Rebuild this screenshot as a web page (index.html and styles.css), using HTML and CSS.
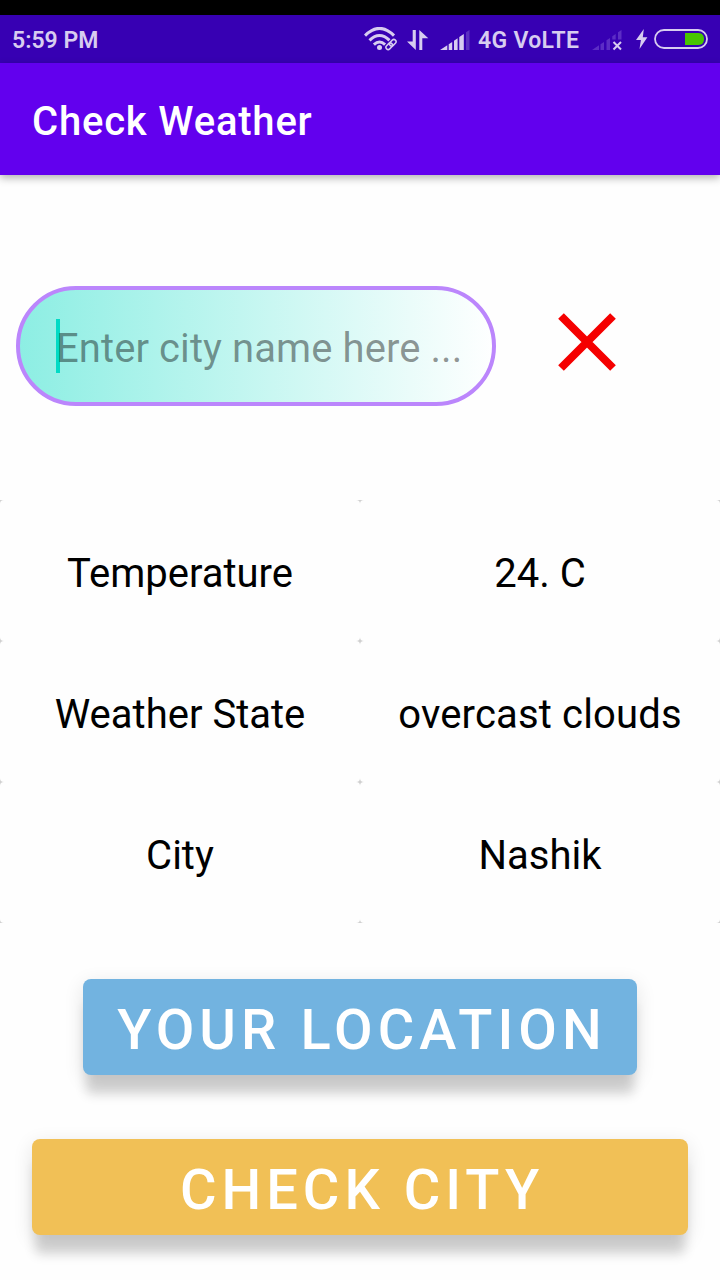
FILE: index.html
```html
<!DOCTYPE html>
<html lang="en">
<head>
<meta charset="utf-8">
<title>Check Weather</title>
<link rel="stylesheet" href="styles.css">
</head>
<body>
<div class="screen">
  <header class="status-bar">
    <span class="clock">5:59 PM</span>
    <svg class="wifi" width="34" height="24" viewBox="0 0 34 24">
      <g fill="none" stroke="#d7ccf0" stroke-width="3">
        <path d="M1 8.600Q15.500-5.800 30 8.600"/>
        <path d="M5.500 13.400Q15.500 3.400 25.500 13.400"/>
        <path d="M9.900 17.600Q15.500 12.400 21.100 17.600"/>
      </g>
      <circle cx="15.500" cy="20.500" r="2.500" fill="#d7ccf0"/>
      <g fill="none" stroke="#3700b3" stroke-width="3" transform="rotate(-45 27 17.500)"><rect x="21" y="15.300" width="12" height="4.400" rx="2.200"/></g>
      <g fill="none" stroke="#d7ccf0" stroke-width="1.500" transform="rotate(-45 27 17.500)"><rect x="20.800" y="15.300" width="7.400" height="4.400" rx="2.200"/><rect x="25.800" y="15.300" width="7.400" height="4.400" rx="2.200"/></g>
    </svg>
    <svg class="data" width="22" height="20" viewBox="0 0 22 20" fill="#d7ccf0">
      <path d="M5.700 0H8.800V20L0 11.500H5.700ZM12.300 0L21.300 8.300H15.300V20H12.300Z"/>
    </svg>
    <svg class="signal" width="30" height="20" viewBox="0 0 30 20" fill="#d7ccf0">
      <path d="M0 20L7.300 15.300V20ZM8.700 14.300L12.200 12V20H8.700ZM14 10.700L17.600 8.300V20H14ZM19.300 7L23.800 3.900V20H19.300Z"/>
      <path d="M26 2.300L29.500 0V20H26Z" opacity=".24"/>
    </svg>
    <span class="network">4G VoLTE</span>
    <svg class="signal-off" width="32" height="21" viewBox="0 0 32 21">
      <path fill="#5c2dc5" d="M0 20L7 15.300V20ZM8.500 14.300L12 12V20H8.500ZM14.500 10.300L18 8V20H14.500ZM20.300 6.200L23.700 4V9.500H20.300ZM26 2.300L29.500 0V9.500H26Z"/>
      <path d="M21.500 12L29 19.500M29 12L21.500 19.500" stroke="#d7ccf0" stroke-width="2" fill="none"/>
    </svg>
    <svg class="bolt" width="12" height="20" viewBox="0 0 12 20" fill="#d7ccf0"><path d="M7.800 0L0 11H4.900L3.500 20L11.400 8.300H6.800Z"/></svg>
    <svg class="battery" width="54" height="20" viewBox="0 0 54 20">
      <rect x="1" y="1" width="52" height="18" rx="9" fill="none" stroke="#d7ccf0" stroke-width="1.800"/>
      <path fill="#48c600" d="M31 4H44.500C48.500 4 50 7 50 10S48.500 16 44.500 16H31Z"/>
    </svg>
  </header>
  <div class="app-bar"><h1 class="title">Check Weather</h1></div>
  <main class="content">
    <form class="search">
      <div class="field"><span class="caret"></span><span class="hint">Enter city name here ...</span></div>
      <svg class="clear" width="58" height="58" viewBox="0 0 58 58"><path d="M3 3L55 55M55 3L3 55" stroke="#f50000" stroke-width="8"/></svg>
    </form>
    <section class="readings">
      <div class="cell">Temperature</div><div class="cell">24. C</div>
      <div class="cell">Weather State</div><div class="cell wide">overcast clouds</div>
      <div class="cell">City</div><div class="cell">Nashik</div>
    </section>
    <div class="actions">
      <div class="button location">YOUR LOCATION</div>
      <div class="button check">CHECK CITY</div>
    </div>
  </main>
</div>
</body>
</html>
```
FILE: styles.css
```css
* { box-sizing: border-box; }
body { margin: 0; background: #fefefe; font-family: Roboto, "Liberation Sans", sans-serif; }
.screen { width: 720px; height: 1280px; overflow: hidden; display: flex; flex-direction: column; }
.status-bar {
  height: 63px;
  border-top: 15px solid #000;
  background: #3700b3;
  color: #d7ccf0;
  display: flex;
  align-items: center;
  padding: 2px 12px 0;
  font-size: 23px;
  font-weight: 600;
  line-height: 28px;
  white-space: nowrap;
}
.status-bar svg { flex: none; }
.status-bar span { padding-top: 2px; }
.clock { width: 352px; }
.wifi { margin: -2px 9px 0 0; }
.data { margin-right: 11px; }
.signal { margin-right: 8px; }
.network { width: 114px; letter-spacing: .3px; }
.signal-off { margin-right: 12px; }
.bolt { margin: -2px 6px 0 0; }
.battery { margin-top: -2px; }
.app-bar {
  height: 112px;
  background: #6200ee;
  box-shadow: 0 3px 8px rgba(0, 0, 0, .3);
  display: flex;
  align-items: center;
  padding: 6px 32px 0;
}
.title { margin: 0; color: #fff; font-size: 40px; font-weight: 500; letter-spacing: .8px; line-height: 48px; }
.content { padding-top: 111px; }
.search { height: 120px; margin: 0 0 94px; padding-left: 16px; display: flex; align-items: center; }
.field {
  width: 480px;
  height: 120px;
  border: 4px solid #bb86fc;
  border-radius: 60px;
  background: linear-gradient(90deg, #8ceee3, #fff) border-box;
  display: flex;
  align-items: center;
  padding-left: 36px;
  white-space: nowrap;
}
.caret { width: 4px; height: 54px; background: #03dac5; margin-right: -4px; }
.hint { color: rgba(0, 0, 0, .42); font-size: 40px; line-height: 48px; padding-top: 6px; letter-spacing: .08px; }
.clear { margin: -8px 0 0 62px; }
.readings {
  display: grid;
  grid-template-columns: 1fr 1fr;
  grid-auto-rows: 141px;
  background: #d0d0d0;
  font-size: 40px;
  color: #000;
}
.cell { display: flex; align-items: center; justify-content: center; background: #fefefe; border-radius: 4px; padding-top: 5px; white-space: nowrap; }
.wide { letter-spacing: .15px; }
.actions { padding-top: 56px; display: flex; flex-direction: column; align-items: center; gap: 64px; }
.button {
  height: 96px;
  border-radius: 8px;
  display: flex;
  align-items: center;
  justify-content: center;
  padding: 6px 0 0 4px;
  color: #fff;
  font-size: 56px;
  font-weight: 500;
  letter-spacing: 5px;
  white-space: nowrap;
  box-shadow: 0 22px 12px -3px rgba(0, 0, 0, .165), 0 5px 20px rgba(0, 0, 0, .11);
}
.location { width: 554px; background: #72b3e0; letter-spacing: 5.1px; }
.check { width: 656px; background: #f1c056; }
```
